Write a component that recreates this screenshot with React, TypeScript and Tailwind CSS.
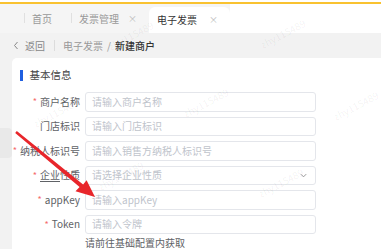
import React from "react";

const FONT = { fontFamily: '"Noto Sans CJK SC", "Noto Sans", sans-serif' };

function Field({
  label,
  required,
  placeholder,
  select,
  underline,
}: {
  label: string;
  required?: boolean;
  placeholder: string;
  select?: boolean;
  underline?: boolean;
}) {
  return (
    <div className="flex h-[19.5px] items-center">
      <div className="flex w-[68px] shrink-0 items-center justify-end text-[10px] leading-none text-[#606266]">
        {required && <span className="mr-[3px] text-[9px] text-[#f56c6c]">*</span>}
        {underline ? (
          <span>
            <span className="underline decoration-[#606266] underline-offset-2">企业</span>性质
          </span>
        ) : (
          <span>{label}</span>
        )}
      </div>
      <div className="ml-[5px] flex h-full w-[231px] items-center justify-between rounded-[3px] border border-[#e4e6eb] bg-white pl-[6px] pr-[6px] text-[10px] leading-none text-[#c0c4cc]">
        <span>{placeholder}</span>
        {select && (
          <svg width="9" height="9" viewBox="0 0 10 10" className="mr-[1px]">
            <path d="M2 3.5 L5 6.5 L8 3.5" fill="none" stroke="#8c8c8c" strokeWidth="1" />
          </svg>
        )}
      </div>
    </div>
  );
}

const marks: [number, number][] = [
  [130, 35],
  [282, 33],
  [55, 112],
  [205, 102],
  [355, 105],
  [120, 175],
  [280, 182],
];

export default function App() {
  return (
    <div className="relative h-[249px] w-[381px] overflow-hidden bg-[#f2f2f2]" style={FONT}>
      <div className="h-[2px] bg-white" />
      <div className="h-[1.5px] bg-[#f9c230]" />
      {/* tab bar */}
      <div className="flex h-[29.5px] items-stretch bg-[#f5f5f5] text-[10px] text-[#999]">
        <div className="flex items-center pl-[24px]">
          <div className="h-[10px] w-px bg-[#e0e0e0]" />
          <span className="ml-[7px]">首页</span>
          <div className="ml-[19px] h-[10px] w-px bg-[#e0e0e0]" />
          <span className="ml-[7px]">发票管理</span>
          <span className="ml-[9px] text-[9px] text-[#bbb]">×</span>
        </div>
        <div className="ml-[12px] mt-[3px] flex items-center rounded-t-[6px] bg-white pl-[8px] pr-[12px] text-[#333]">
          <span>电子发票</span>
          <span className="ml-[12px] text-[9px] text-[#bbb]">×</span>
        </div>
        <div className="flex-1 bg-white" />
      </div>
      {/* breadcrumb */}
      <div className="flex h-[25px] items-center text-[10px]">
        <svg width="6" height="9" viewBox="0 0 6 9" className="ml-[13px]">
          <path d="M4.5 1 L1.5 4.5 L4.5 8" fill="none" stroke="#888" strokeWidth="1" />
        </svg>
        <span className="ml-[6px] text-[#888]">返回</span>
        <div className="ml-[9px] h-[11px] w-px bg-[#dcdcdc]" />
        <span className="ml-[8px] text-[#999]">电子发票</span>
        <span className="mx-[4px] text-[#999]">/</span>
        <span className="font-medium text-[#333]">新建商户</span>
      </div>
      {/* main */}
      <div className="flex">
        <div className="w-[12px] shrink-0">
          <div className="mt-[70px] h-[30px] rounded-r-[4px] bg-[#e9e9e9]" />
        </div>
        <div className="h-[200px] flex-1 rounded-tl-[5px] bg-white">
          <div className="flex h-[34px] items-center pl-[8px]">
            <div className="h-[11px] w-[2.5px] bg-[#1f5fe0]" />
            <span className="ml-[7px] text-[10.5px] text-[#444]">基本信息</span>
          </div>
          <div className="flex flex-col gap-[5px]">
            <Field label="商户名称" required placeholder="请输入商户名称" />
            <Field label="门店标识" placeholder="请输入门店标识" />
            <Field label="纳税人标识号" required placeholder="请输入销售方纳税人标识号" />
            <Field label="企业性质" required underline placeholder="请选择企业性质" select />
            <Field label="appKey" required placeholder="请输入appKey" />
            <Field label="Token" required placeholder="请输入令牌" />
          </div>
          <div className="ml-[73px] mt-[3px] text-[10px] leading-[12px] text-[#606266]">请前往基础配置内获取</div>
        </div>
      </div>
      {/* watermark */}
      {marks.map(([x, y], i) => (
        <div
          key={i}
          className="pointer-events-none absolute text-[10px] text-[rgba(0,0,0,0.06)]"
          style={{ left: x - 24, top: y - 7, transform: "rotate(-28deg)" }}
        >
          zhy115489
        </div>
      ))}
      {/* red arrow */}
      <svg className="pointer-events-none absolute left-0 top-0" width="381" height="249">
        <polygon
          points="16.8,130.9 83.1,184.6 86.6,180.2 95,197 75.5,191.3 79.6,187.1 15.2,133.1"
          fill="#e8262b"
        />
      </svg>
    </div>
  );
}
